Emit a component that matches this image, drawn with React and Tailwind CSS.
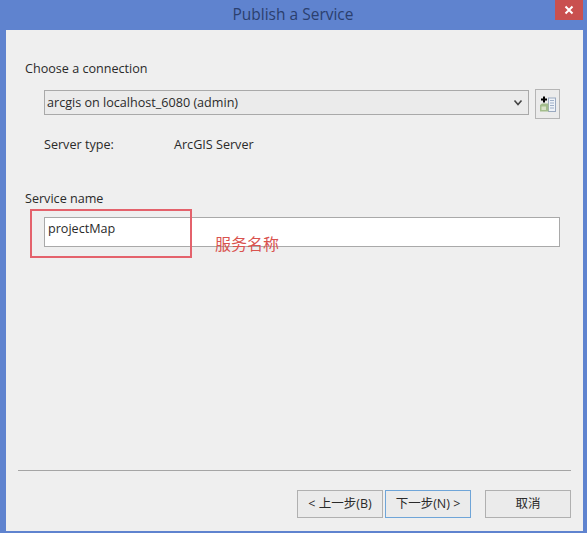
const font = { cjk: "font-['Open_Sans','Noto_Sans_CJK_SC',sans-serif]" };

const WizardButton = ({ children, focused, className = "" }) => (
  <button
    className={`h-[28px] text-[12.5px] text-[#2a2a2a] flex items-center justify-center bg-[#ebebeb] border ${
      focused ? "border-[#6fa5d8]" : "border-[#b0b0b0]"
    } ${className}`}
  >
    {children}
  </button>
);

const AddConnectionIcon = () => (
  <svg width="18" height="18" viewBox="0 0 18 18">
    <rect x="9.500" y="3" width="7" height="13.500" fill="#eef2f8" stroke="#9aa9bf" />
    <path d="M11 5.500h4M11 8h4M11 10.500h4M11 13h4" stroke="#9fb0c8" />
    <path d="M1 10l2-1.500h6.500v8H1z" fill="#a3bd8c" />
    <path d="M2.500 11.500h4.500v3.500H2.500z" fill="#d8e2c8" />
    <path d="M5 1.500v6M2 4.500h6" stroke="#000" strokeWidth="2" />
  </svg>
);

export default function App() {
  return (
    <div className={`relative w-[587px] h-[533px] flex flex-col bg-[#5f83cf] ${font.cjk}`}>
      <div className="relative h-[30px] shrink-0 flex items-center justify-center">
        <span className="text-[15.500px] text-[#2b3f6e] leading-none -mt-[1px] -ml-[1px]">Publish a Service</span>
        <div className="absolute top-0 right-[4px] w-[28px] h-[20px] bg-[#c9504f] flex items-center justify-center">
          <svg width="10" height="10" viewBox="0 0 10 10">
            <path d="M1.500 1.500l7 7M8.500 1.500l-7 7" stroke="#fff" strokeWidth="2" />
          </svg>
        </div>
      </div>

      <div className="ml-[6px] mr-[4px] mb-[2px] flex-1 flex flex-col bg-[#efefef] text-[12.600px] text-[#2a2a2a]">
        <div className="pl-[19px] pr-[23px] flex-1">
          <div className="pt-[29px] leading-[20px]">Choose a connection</div>

          <div className="mt-[10px] ml-[19px] flex items-start gap-[6px]">
            <div className="mt-[1px] flex-1 h-[25px] pl-[2px] pr-[5px] flex items-center justify-between bg-[#ebebeb] border border-[#a9a9a9]">
              <span className="pt-[1px]">arcgis on localhost_6080 (admin)</span>
              <svg width="10" height="8" viewBox="0 0 10 8">
                <path d="M1.500 1.500L5 5.500l3.500-4" fill="none" stroke="#444" strokeWidth="1.600" />
              </svg>
            </div>
            <div className="w-[25px] h-[30px] flex items-center justify-center bg-[#ebebeb] border border-[#b5b5b5]">
              <AddConnectionIcon />
            </div>
          </div>

          <div className="mt-[16px] ml-[19px] flex leading-[20px]">
            <span className="w-[130px]">Server type:</span>
            <span>ArcGIS Server</span>
          </div>

          <div className="mt-[34px] leading-[20px]">Service name</div>
          <div className="mt-[8px] ml-[19px] h-[30px] pl-[3px] pt-[1px] bg-white border border-[#a9a9a9] leading-[20px]">
            projectMap
          </div>
        </div>

        <div className="ml-[12px] mr-[12px] h-[1px] bg-[#a5a5a5]" />
        <div className="h-[60px] shrink-0 pt-[19px] pl-[291px] flex items-start">
          <WizardButton className="w-[86px]">&lt; 上一步(B)</WizardButton>
          <WizardButton focused className="w-[86px] ml-[2px]">下一步(N) &gt;</WizardButton>
          <WizardButton className="w-[86px] ml-[14px]">取消</WizardButton>
        </div>
      </div>

      {/* annotation drawn on top of the screenshot */}
      <div className="absolute left-[30px] top-[209px] w-[162px] h-[49px] border-2 border-[#e4626c]" />
      <span className="absolute left-[215px] top-[233px] text-[16px] leading-[22px] text-[#d9534f]">服务名称</span>
    </div>
  );
}
